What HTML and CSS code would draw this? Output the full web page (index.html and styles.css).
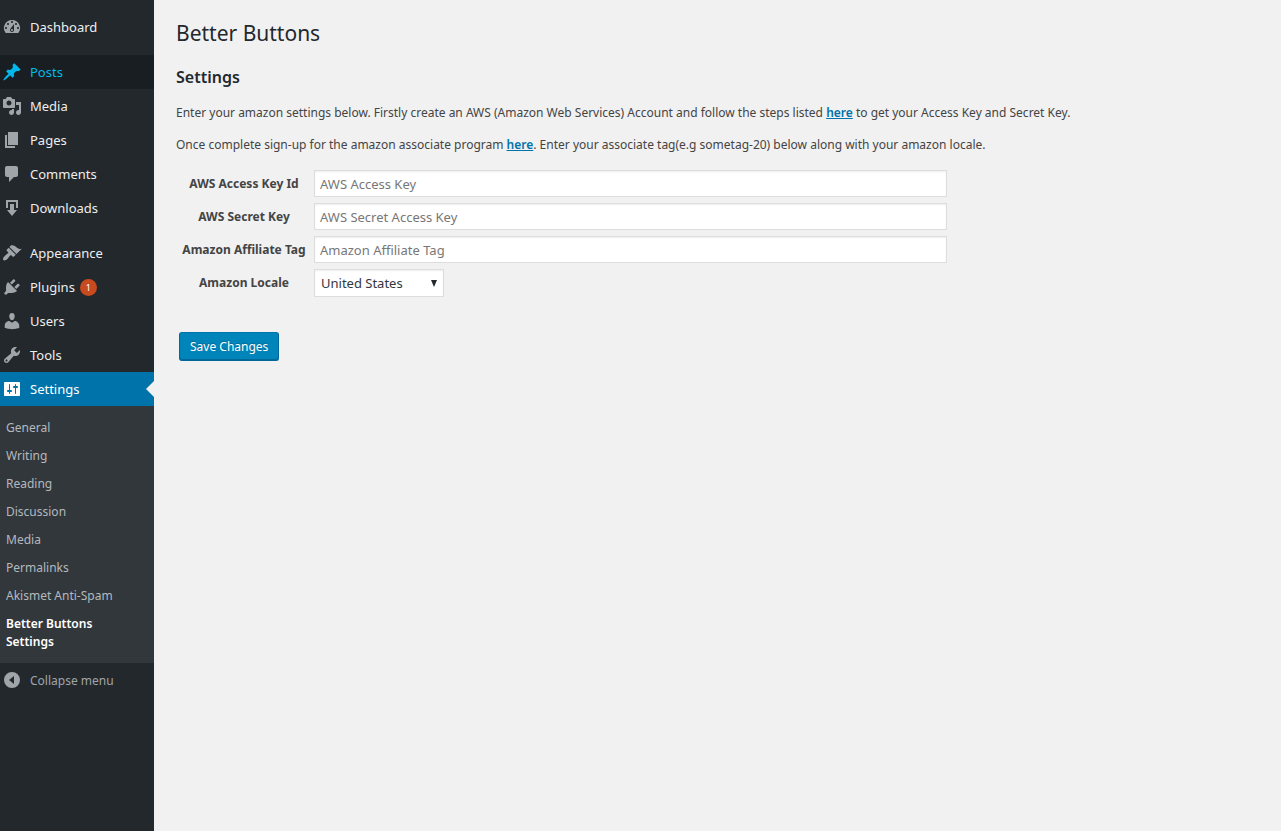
FILE: index.html
```html
<!DOCTYPE html>
<html lang="en">
<head>
  <meta charset="UTF-8">
  <title>Better Buttons Settings</title>
  <link rel="stylesheet" href="styles.css">
</head>
<body>
  <nav class="admin-menu">
    <ul class="menu">
      <li><a href="#">
        <svg viewBox="0 0 20 20"><path fill-rule="evenodd" d="M3.76 16h12.48A7.998 7.998 0 0 0 10 3a7.998 7.998 0 0 0-6.24 13zM10 4c.55 0 1 .45 1 1s-.45 1-1 1-1-.45-1-1 .45-1 1-1zM6 6c.55 0 1 .45 1 1s-.45 1-1 1-1-.45-1-1 .45-1 1-1zm8 0c.55 0 1 .45 1 1s-.45 1-1 1-1-.45-1-1 .45-1 1-1zm-5.37 5.55L12 7v6c0 1.1-.9 2-2 2s-2-.9-2-2c0-.57.24-1.08.63-1.45zM4 10c.55 0 1 .45 1 1s-.45 1-1 1-1-.45-1-1 .45-1 1-1zm12 0c.55 0 1 .45 1 1s-.45 1-1 1-1-.45-1-1 .45-1 1-1zm-5 3c0-.55-.45-1-1-1s-1 .45-1 1 .45 1 1 1 1-.45 1-1z"/></svg>
        Dashboard</a></li>
      <li class="separator"></li>
      <li class="hover"><a href="#">
        <svg viewBox="0 0 20 20"><path d="M10.44 3.02l1.82-1.82 6.36 6.35-1.83 1.82c-1.05-.68-2.48-.57-3.41.36l-.75.75c-.92.93-1.04 2.35-.35 3.41l-1.83 1.82-2.41-2.41-2.8 2.79c-.42.42-3.38 2.71-3.8 2.29s1.86-3.39 2.28-3.81l2.79-2.79L4.1 9.36l1.83-1.82c1.05.69 2.48.57 3.4-.36l.75-.75c.93-.92 1.05-2.35.36-3.41z"/></svg>
        Posts</a></li>
      <li><a href="#">
        <svg viewBox="0 0 20 20"><path fill-rule="evenodd" d="M13 11V4c0-.55-.45-1-1-1h-1.67L9 1H5L3.67 3H2c-.55 0-1 .45-1 1v7c0 .55.45 1 1 1h10c.55 0 1-.45 1-1zM7 4.5c1.38 0 2.5 1.12 2.5 2.5S8.38 9.5 7 9.5 4.5 8.38 4.5 7 5.62 4.5 7 4.5zM14 6h5v10.5c0 1.38-1.12 2.5-2.5 2.5S14 17.88 14 16.5s1.12-2.5 2.5-2.5c.17 0 .34.02.5.05V9h-3V6zm-4 8.05V13h2v3.5c0 1.38-1.12 2.5-2.5 2.5S7 17.88 7 16.5 8.12 14 9.5 14c.17 0 .34.02.5.05z"/></svg>
        Media</a></li>
      <li><a href="#">
        <svg viewBox="0 0 20 20"><path d="M6 15V2h10v13H6zm-1 1h8v2H3V5h2v11z"/></svg>
        Pages</a></li>
      <li><a href="#">
        <svg viewBox="0 0 20 20"><path d="M5 2h9c1.1 0 2 .9 2 2v7c0 1.1-.9 2-2 2h-2l-5 5v-5H5c-1.1 0-2-.9-2-2V4c0-1.1.9-2 2-2z"/></svg>
        Comments</a></li>
      <li><a href="#">
        <svg viewBox="0 0 20 20"><path d="M14.01 4v6h2V2H4v8h2.01V4h8zm-2 2v6h3l-5 6-5-6h3V6h4z"/></svg>
        Downloads</a></li>
      <li class="separator"></li>
      <li><a href="#">
        <svg viewBox="0 0 20 20"><path d="M14.48 11.06L7.41 3.99l1.5-1.5c.5-.56 2.3-.47 3.51.32 1.21.8 1.43 1.28 2.91 2.1 1.18.64 2.45 1.26 4.45.85zm-.71.71L6.7 4.7 4.93 6.47c-.39.39-.39 1.02 0 1.41l1.06 1.06c.39.39.39 1.03 0 1.42-.6.6-1.43 1.11-2.21 1.69-.35.26-.7.53-1.01.84C1.43 14.23.4 16.08 1.4 17.07c.99 1 2.84-.03 4.18-1.36.31-.31.58-.66.85-1.02.57-.78 1.08-1.61 1.69-2.21.39-.39 1.02-.39 1.41 0l1.06 1.06c.39.39 1.02.39 1.41 0z"/></svg>
        Appearance</a></li>
      <li><a href="#">
        <svg viewBox="0 0 20 20"><path d="M13.11 4.36L9.87 7.6 8 5.73l3.24-3.24c.35-.34 1.05-.2 1.56.32.52.51.66 1.21.31 1.55zm-8 1.77l.91-1.12 9.01 9.01-1.19.84c-.71.71-2.63 1.16-3.82 1.16H6.14L4.9 17.26c-.59.59-1.54.59-2.12 0-.59-.58-.59-1.53 0-2.12l1.24-1.24v-3.88c0-1.13.4-3.19 1.09-3.89zm7.26 3.97l3.24-3.24c.34-.35 1.04-.21 1.55.31.52.51.66 1.21.31 1.55l-3.24 3.25z"/></svg>
        Plugins <span class="count">1</span></a></li>
      <li><a href="#">
        <svg viewBox="0 0 20 20"><path d="M10 9.25c-2.27 0-2.73-3.44-2.73-3.44C7 4.02 7.82 2 9.97 2c2.16 0 2.98 2.02 2.71 3.81 0 0-.41 3.44-2.68 3.44zm0 2.57L12.72 10c2.39 0 4.52 2.33 4.52 4.53v2.49s-3.65 1.13-7.24 1.13c-3.65 0-7.24-1.13-7.24-1.13v-2.49c0-2.25 1.94-4.48 4.47-4.48z"/></svg>
        Users</a></li>
      <li><a href="#">
        <svg viewBox="0 0 20 20"><path fill-rule="evenodd" d="M16.68 9.77c-1.34 1.34-3.3 1.67-4.95.99l-5.41 6.52c-.99.99-2.59.99-3.58 0s-.99-2.59 0-3.57l6.52-5.42c-.68-1.65-.35-3.61.99-4.95 1.28-1.28 3.12-1.62 4.72-1.06l-2.89 2.89 2.82 2.82 2.86-2.87c.53 1.58.18 3.39-1.08 4.65zM3.81 16.21c.4.39 1.04.39 1.43 0 .4-.4.4-1.04 0-1.43-.39-.4-1.03-.4-1.43 0-.39.39-.39 1.03 0 1.43z"/></svg>
        Tools</a></li>
      <li class="current"><a href="#">
        <svg viewBox="0 0 20 20"><path fill-rule="evenodd" d="M18 16V4c0-.55-.45-1-1-1H3c-.55 0-1 .45-1 1v12c0 .55.45 1 1 1h14c.55 0 1-.45 1-1zM8 11h1c.55 0 1 .45 1 1s-.45 1-1 1H8v1.5c0 .28-.22.5-.5.5s-.5-.22-.5-.5V13H6c-.55 0-1-.45-1-1s.45-1 1-1h1V5.5c0-.28.22-.5.5-.5s.5.22.5.5V11zm5-2h-1c-.55 0-1-.45-1-1s.45-1 1-1h1V5.5c0-.28.22-.5.5-.5s.5.22.5.5V7h1c.55 0 1 .45 1 1s-.45 1-1 1h-1v5.5c0 .28-.22.5-.5.5s-.5-.22-.5-.5V9z"/></svg>
        Settings</a></li>
    </ul>
    <ul class="submenu">
      <li><a href="#">General</a></li>
      <li><a href="#">Writing</a></li>
      <li><a href="#">Reading</a></li>
      <li><a href="#">Discussion</a></li>
      <li><a href="#">Media</a></li>
      <li><a href="#">Permalinks</a></li>
      <li><a href="#">Akismet Anti-Spam</a></li>
      <li><a href="#" class="active">Better Buttons Settings</a></li>
    </ul>
    <button type="button" class="collapse">
      <svg viewBox="0 0 20 20"><path fill-rule="evenodd" d="M10 2a8 8 0 1 0 0 16 8 8 0 0 0 0-16zM12 6v8l-5-4z"/></svg>
      Collapse menu
    </button>
  </nav>

  <main class="content">
    <h1>Better Buttons</h1>
    <h2>Settings</h2>
    <p>Enter your amazon settings below. Firstly create an AWS (Amazon Web Services) Account and follow the steps listed <a href="#">here</a> to get your Access Key and Secret Key.</p>
    <p>Once complete sign-up for the amazon associate program <a href="#">here</a>. Enter your associate tag(e.g sometag-20) below along with your amazon locale.</p>

    <form>
      <div class="fields">
        <label for="access-key">AWS Access Key Id</label>
        <input type="text" id="access-key" placeholder="AWS Access Key">
        <label for="secret-key">AWS Secret Key</label>
        <input type="text" id="secret-key" placeholder="AWS Secret Access Key">
        <label for="tag">Amazon Affiliate Tag</label>
        <input type="text" id="tag" placeholder="Amazon Affiliate Tag">
        <label for="locale">Amazon Locale</label>
        <div class="select-wrap">
          <select id="locale">
            <option>United States</option>
          </select>
          <svg viewBox="0 0 6 7"><path d="M0 0h6L3 7z"/></svg>
        </div>
      </div>
      <button type="submit" class="save">Save Changes</button>
    </form>
  </main>
</body>
</html>
```

FILE: styles.css
```css
* { box-sizing: border-box; }
body {
  margin: 0;
  display: flex;
  min-height: 100vh;
  background: #f1f1f1;
  color: #444;
  font-family: "Segoe UI", "Noto Sans", "Open Sans", sans-serif;
  font-size: 12px;
  line-height: 18px;
}
button, input, select { font-family: inherit; }

/* sidebar */
.admin-menu {
  width: 154px;
  flex-shrink: 0;
  padding-top: 10px;
  background: #23282d;
}
.menu, .submenu { list-style: none; margin: 0; padding: 0; }
.menu a {
  display: flex;
  align-items: center;
  gap: 8px;
  height: 34px;
  padding-left: 2px;
  color: #eee;
  font-size: 13px;
  text-decoration: none;
}
.menu svg, .collapse svg { width: 20px; height: 20px; fill: #a0a5aa; }
.separator { height: 11px; }
.hover a { background: #191e23; color: #00b9eb; }
.hover svg { fill: #00b9eb; }
.current a { position: relative; background: #0073aa; color: #fff; }
.current svg { fill: #fff; }
.current a::after {
  content: "";
  position: absolute;
  right: 0;
  top: 9px;
  border: 8px solid transparent;
  border-left: 0;
  border-right-color: #f1f1f1;
}
.count {
  width: 17px;
  height: 17px;
  margin-left: -3px;
  border-radius: 50%;
  background: #ca4a1f;
  color: #fff;
  font-size: 9px;
  line-height: 17px;
  text-align: center;
}
.submenu { padding: 8px 0 7px; background: #32373c; }
.submenu a {
  display: block;
  padding: 5px 20px 5px 6px;
  color: #b4b9be;
  text-decoration: none;
}
.submenu .active { color: #fff; font-weight: 600; }
.collapse {
  display: flex;
  align-items: center;
  gap: 8px;
  height: 34px;
  padding: 0 0 0 2px;
  border: 0;
  background: none;
  color: #a0a5aa;
  font-size: 12px;
}

/* page */
.content { flex: 1; padding: 19px 22px; }
h1 {
  margin: 0;
  color: #23282d;
  font-size: 21px;
  font-weight: 400;
  line-height: 29px;
}
h2 {
  margin: 18px 0 16px;
  color: #23282d;
  font-size: 16px;
  font-weight: 600;
  line-height: 22px;
}
p { margin: 0 0 14px; }
p a { color: #0073aa; font-weight: 600; }
.fields {
  display: grid;
  grid-template-columns: 130px 1fr;
  gap: 6px 5px;
  max-width: 771px;
  padding: 2px 0 0 3px;
}
.fields label {
  align-self: center;
  font-weight: 700;
  text-align: center;
  white-space: nowrap;
}
.fields input, .fields select {
  height: 27px;
  border: 1px solid #ddd;
  background: #fff;
  box-shadow: inset 0 1px 2px rgba(0, 0, 0, .07);
  color: #32373c;
  font-size: 13px;
}
.fields input { width: 100%; padding: 3px 5px; }
.fields input::placeholder { color: #777; }
.select-wrap { position: relative; width: 130px; }
.fields select {
  display: block;
  width: 100%;
  height: 28px;
  padding: 2px 6px;
  border-radius: 0;
  appearance: none;
}
.select-wrap svg {
  position: absolute;
  right: 7px;
  top: 11px;
  width: 6px;
  height: 7px;
  fill: #23282d;
  pointer-events: none;
}
.save {
  height: 29px;
  margin: 35px 0 0 3px;
  padding: 0 10px;
  border: 1px solid #006799;
  border-top-color: #0073aa;
  border-radius: 3px;
  background: #0085ba;
  box-shadow: inset 0 -1px 0 #006799;
  color: #fff;
  font-size: 12px;
  text-shadow: 0 -1px 1px #006799;
  cursor: pointer;
}
```
